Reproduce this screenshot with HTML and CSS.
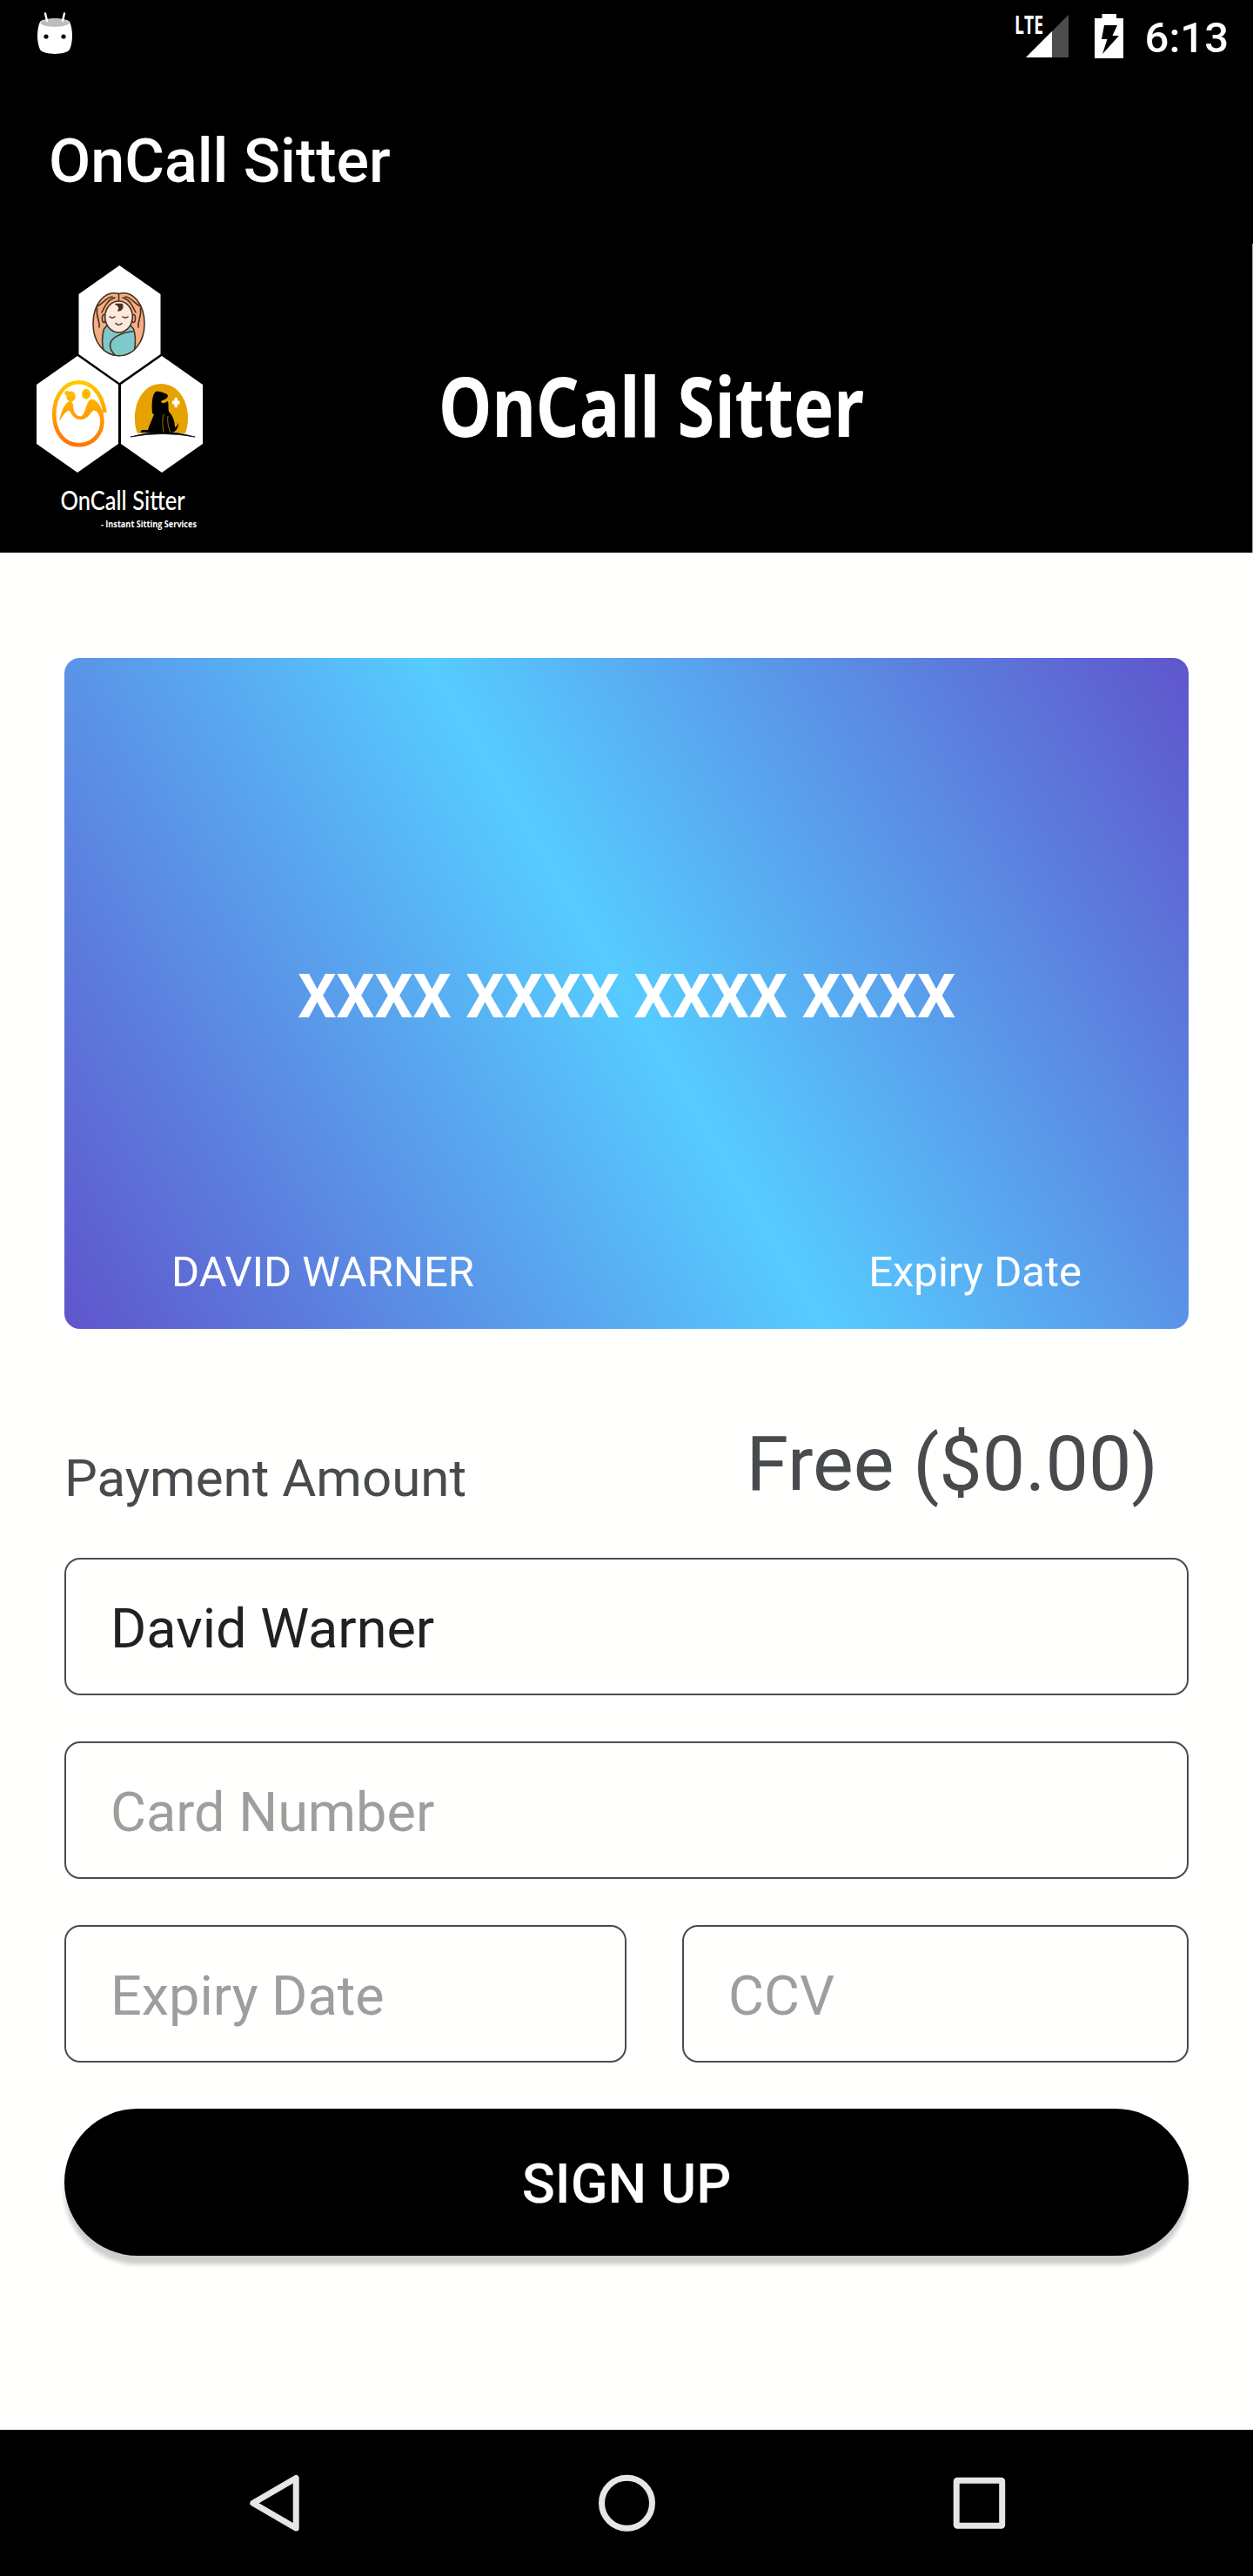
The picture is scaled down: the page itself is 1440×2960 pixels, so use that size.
FILE: index.html
```html
<!DOCTYPE html>
<html lang="en">
<head>
<meta charset="utf-8">
<title>OnCall Sitter</title>
<link rel="stylesheet" href="styles.css">
</head>
<body>
<div class="screen">
  <div class="status">
    <svg class="droid" width="40" height="50" viewBox="0 0 40 50">
      <path d="M3 11C8 6 32 6 37 11C41 20 41 34 37 43C32 49.500 8 49.500 3 43C-1 34-1 20 3 11Z" fill="#fff"/>
      <ellipse cx="20" cy="12.300" rx="16.500" ry="4.500" fill="#bdbdbd"/>
      <path d="M9 1.500l2 8.500M31 1.500l-2 8.500" stroke="#fff" stroke-width="2.400" stroke-linecap="round"/>
      <circle cx="10" cy="28" r="2.600"/><circle cx="30" cy="28" r="2.600"/>
    </svg>
    <div class="status-right">
      <svg class="signal" width="64" height="50" viewBox="0 0 64 50">
        <path d="M61 1V50H12Z" fill="#4d4d4d"/>
        <path d="M42 20V50H12Z" fill="#fff"/>
        <text x="-1" y="23" textLength="33" lengthAdjust="spacingAndGlyphs" class="lte">LTE</text>
      </svg>
      <svg class="battery" width="33" height="51" viewBox="0 0 33 51">
        <path d="M8.500 0H25V5H33V51H0V5H8.500Z" fill="#fff"/>
        <path d="M11 13H26L20.500 25H28L9 46L14.500 29H8Z"/>
      </svg>
      <span class="time">6:13</span>
    </div>
  </div>
  <div class="appbar">OnCall Sitter</div>
  <header class="banner">
    <svg class="logo" width="240" height="355" viewBox="20 280 240 355">
      <defs>
        <linearGradient id="folk" gradientUnits="userSpaceOnUse" x1="0" y1="437" x2="0" y2="513"><stop offset="0" stop-color="#ffcc00"/><stop offset="1" stop-color="#ff7300"/></linearGradient>
      </defs>
      <g fill="#fff">
        <path d="M137.300 305L184.500 338V407L137.300 440L90.500 407V338Z"/>
        <path d="M89 409L136 442V510L89 543L42 510V442Z"/>
        <path d="M186 409L233 442V510L186 543L139 510V442Z"/>
      </g>
      <g stroke="#4a3020" stroke-width="1.600" stroke-linejoin="round" stroke-linecap="round">
        <path d="M136.700 337.500C120 333 107 350 107 372C107 394 120 408.500 136.500 408.500C153 408.500 166 394 166 372C166 350 153 333 136.700 337.500Z" fill="#f4ae85"/>
        <path d="M111.500 352C119 349 121 342 129 341M117 359C121 351 124 344 132 342M111.500 354C110 364 115 368 114 376M161.500 352C154 349 152 342 144 341M156 359C152 351 149 344 141 342M161.500 354C163 364 158 368 159 376M136.500 338V348" fill="none"/>
        <path d="M119.500 378C117 386 117 396 119 402C130 411 144 411 154.500 402C156 394 156 386 153.500 378L150 374H123Z" fill="#7ecaca"/>
        <ellipse cx="119.500" cy="366" rx="2" ry="4.500" fill="#f4ae85"/><ellipse cx="153.500" cy="366" rx="2" ry="4.500" fill="#f4ae85"/>
        <ellipse cx="136.500" cy="364" rx="15.800" ry="18" fill="#fde8de"/>
        <path d="M152.500 381C140 382 127 388 126.500 396C126.500 402 129 405 132 407.500" fill="none"/>
        <path d="M133 349.500C137 351 138 354 136 357C141 356 142 352 140 349.500Z" fill="#4a3020"/>
        <path d="M126 364q3 2.500 6 0M141 364q3 2.500 6 0M133 371.500q3.500 3.500 7 0" fill="none"/>
      </g>
      <path d="M120.500 474C117 450 104 439.300 90.500 439.300C74 439.300 62.200 455 62.200 476C62.200 497 74 511.300 90.500 511.300C106 511.300 117.500 499 117.500 484C117.500 477 115 472 109 467" fill="none" stroke="url(#folk)" stroke-width="4.600"/>
      <g fill="url(#folk)">
        <path d="M68 484.500C70 474 73 466 78 462C81 459.500 84 462 84 466C84 473 87 478 92.300 478.500C99 478 98 461 105 458.500C111 459 117 467 119.500 478C115 474 111 472 107.500 471.500C102 476 101 482 92.300 482C85 482 82.500 476 79.500 471.500C75 473 71.500 478 68 484.500Z"/>
        <ellipse cx="81.500" cy="455.500" rx="5.200" ry="6"/><circle cx="77" cy="451.500" r="2.600"/>
        <ellipse cx="99" cy="452.700" rx="5" ry="6"/>
      </g>
      <path d="M158 498C149 474 160 441 185 441C211 441 222 474 213 498Q186 496 158 498Z" fill="#e6a200"/>
      <path d="M150 502Q187 491 224 502Q187 495 150 502Z" stroke="#111" stroke-width=".8"/>
      <path d="M175 475C174 463 175 453 179 450C183 449 187 451 192 453L193 455C192 459 188 459 185 461L186 463L189 463L193 461C194 465 193 469 194 473C199 478 201 485 201 491C204 490 204 487 205 486C205 492 202 496 198 497L161 497L163 494L170 494C172 487 175 482 177 476Z"/>
      <path d="M188 476C186 484 187 490 188 497M193 478C192 486 194 492 196 497" fill="none" stroke="#e6a200" stroke-width=".7"/>
      <path d="M198 460.500h2.500v-3.500h3.500v3.500h2.500v4h-2.500v3.500h-3.500v-3.500h-2.500z" fill="#fff"/>
      <text class="logo-name" x="69.500" y="586" textLength="143" lengthAdjust="spacingAndGlyphs">OnCall Sitter</text>
      <text class="logo-tag" x="116" y="606" textLength="110" lengthAdjust="spacingAndGlyphs">- Instant Sitting Services</text>
    </svg>
    <svg class="banner-title" width="500" height="355" viewBox="500 280 500 355">
      <text class="banner-text" x="504" y="502" textLength="489" lengthAdjust="spacingAndGlyphs">OnCall Sitter</text>
    </svg>
  </header>
  <main>
    <section class="card">
      <div class="number">XXXX XXXX XXXX XXXX</div>
      <div class="card-foot"><span>DAVID WARNER</span><span>Expiry Date</span></div>
    </section>
    <div class="payment"><span class="pay-label">Payment Amount</span><span class="pay-value">Free ($0.00)</span></div>
    <form class="form">
      <input class="field" value="David Warner">
      <input class="field" placeholder="Card Number">
      <div class="row"><input class="field expiry" placeholder="Expiry Date"><input class="field ccv" placeholder="CCV"></div>
      <button class="signup" type="button">SIGN UP</button>
    </form>
  </main>
  <nav class="navbar">
    <svg width="66" height="66" viewBox="0 0 66 66"><path d="M58.200 4.500V62L8.800 33.300Z"/></svg>
    <svg width="66" height="66" viewBox="0 0 66 66"><circle cx="33.500" cy="33.200" r="29"/></svg>
    <svg width="66" height="66" viewBox="0 0 66 66"><rect x="7.200" y="7.200" width="52.500" height="52" rx="1"/></svg>
  </nav>
</div>
</body>
</html>
```
FILE: styles.css
```css
* { box-sizing: border-box; }
body { margin: 0; background: #fffffe; font-family: Roboto, sans-serif; }
svg { overflow: visible; }
.screen { width: 1440px; height: 2960px; display: flex; flex-direction: column; }
.status { height: 84px; background: #000; display: flex; justify-content: space-between; padding: 13px 28px 0 43px; }
.droid { margin-top: 1px; }
.status-right { display: flex; align-items: flex-start; }
.signal { margin-top: 3px; margin-right: 27px; }
.lte { font: bold 28px "Open Sans", sans-serif; fill: #fff; }
.battery { margin-top: 3px; margin-right: 25px; }
.time { color: #fff; font-size: 49px; font-weight: 500; line-height: 58px; margin-top: 2px; }
.appbar { height: 196px; background: #000; color: #fff; font-size: 70px; font-weight: 500; line-height: 202px; padding-left: 56px; }
.banner { height: 355px; background: #000; border-right: 1px solid #999; display: flex; padding-left: 20px; gap: 240px; }
.logo-name { font: 500 30px Lato, sans-serif; fill: #fff; }
.logo-tag { font: bold 10px "Open Sans", sans-serif; fill: #fff; }
.banner-text { font: bold 95px "Noto Sans", sans-serif; fill: #fff; }
main { flex: 1; padding: 121px 74px 0; }
.card { height: 771px; border-radius: 18px; background: linear-gradient(59.200deg, #5f55cc 0%, #56ccff 50%, #5f55cc 100%); color: #fff; display: flex; flex-direction: column; justify-content: flex-end; }
.number { font-size: 70px; font-weight: 700; line-height: 82px; letter-spacing: -.4px; text-align: center; margin-bottom: 247px; }
.card-foot { display: flex; justify-content: space-between; font-size: 49px; line-height: 58px; padding: 0 123px; margin-bottom: 36px; }
.payment { display: flex; justify-content: space-between; align-items: flex-start; height: 263px; color: #484b4d; padding-right: 35px; }
.pay-label { font-size: 60px; line-height: 70px; margin-top: 137px; }
.pay-value { font-size: 88px; line-height: 102px; margin-top: 104px; }
.form { display: flex; flex-direction: column; gap: 53px; }
.field { height: 158px; width: 100%; border: 2px solid #4a4d50; border-radius: 18px; background: transparent; padding: 4px 51px 0; font: 400 63px Roboto, sans-serif; color: #212121; outline: none; }
.field::placeholder { color: #9e9e9d; opacity: 1; }
.row { display: flex; justify-content: space-between; }
.expiry { width: 646px; }
.ccv { width: 582px; }
.signup { height: 169px; border: 0; border-radius: 85px; background: #000; color: #fff; font: 500 63px Roboto, sans-serif; padding-top: 4px; box-shadow: 0 10px 5px rgba(0,0,0,.2); }
.navbar { height: 168px; background: #000; display: flex; justify-content: center; align-items: center; gap: 339px; }
.navbar svg { fill: none; stroke: #e6e6e6; stroke-width: 7; stroke-linejoin: round; }
```
